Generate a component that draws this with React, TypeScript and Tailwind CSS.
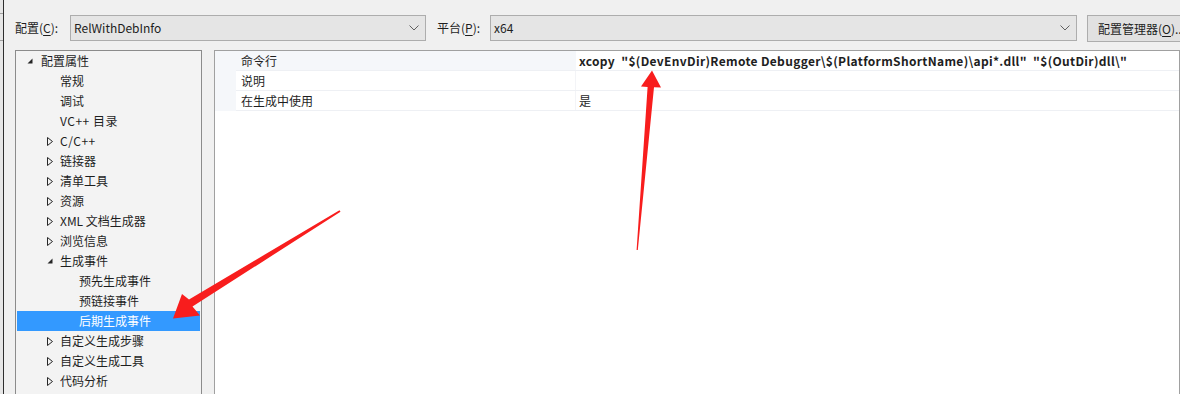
import React from "react";

const FONT = { fontFamily: '"Noto Sans CJK SC", "Noto Sans", sans-serif' };

function Chevron() {
  return (
    <svg width="10" height="6" viewBox="0 0 10 6" className="block">
      <path d="M0.5 0.5 L5 5 L9.5 0.5" fill="none" stroke="#606060" strokeWidth="1" />
    </svg>
  );
}

function Expanded() {
  return (
    <svg width="6" height="6" viewBox="0 0 6 6" className="block">
      <polygon points="5.5,0.5 5.5,5.5 0.5,5.5" fill="#262626" />
    </svg>
  );
}

function Collapsed() {
  return (
    <svg width="6" height="9" viewBox="0 0 6 9" className="block">
      <polygon points="0.5,0.5 5.5,4.5 0.5,8.5" fill="none" stroke="#262626" strokeWidth="1" />
    </svg>
  );
}

type Item = { label: string; level: number; state?: "open" | "closed"; selected?: boolean };

const items: Item[] = [
  { label: "配置属性", level: 0, state: "open" },
  { label: "常规", level: 1 },
  { label: "调试", level: 1 },
  { label: "VC++ 目录", level: 1 },
  { label: "C/C++", level: 1, state: "closed" },
  { label: "链接器", level: 1, state: "closed" },
  { label: "清单工具", level: 1, state: "closed" },
  { label: "资源", level: 1, state: "closed" },
  { label: "XML 文档生成器", level: 1, state: "closed" },
  { label: "浏览信息", level: 1, state: "closed" },
  { label: "生成事件", level: 1, state: "open" },
  { label: "预先生成事件", level: 2 },
  { label: "预链接事件", level: 2 },
  { label: "后期生成事件", level: 2, selected: true },
  { label: "自定义生成步骤", level: 1, state: "closed" },
  { label: "自定义生成工具", level: 1, state: "closed" },
  { label: "代码分析", level: 1, state: "closed" },
];

function TreeRow({ it }: { it: Item }) {
  const textPad = it.level === 0 ? "pl-[24px]" : it.level === 1 ? "pl-[43px]" : "pl-[62px]";
  const triPad = it.level === 0 ? "left-[10px]" : "left-[30px]";
  return (
    <div
      className={
        "relative h-[20px] flex items-center text-[12px] leading-none " +
        textPad +
        (it.selected ? " bg-[#3399ff] text-white" : " text-[#1e1e1e]")
      }
    >
      {it.state && (
        <span className={"absolute top-0 bottom-0 flex items-center " + triPad}>
          {it.state === "open" ? <Expanded /> : <Collapsed />}
        </span>
      )}
      <span className={it.label.startsWith("VC") || it.label.startsWith("C/") ? "tracking-[0.5px]" : ""}>{it.label}</span>
    </div>
  );
}

function Arrows() {
  return (
    <svg className="absolute left-0 top-0 pointer-events-none" width="1180" height="394" viewBox="0 0 1180 394">
      <polygon
        points="340.5,211.8 339.5,210.2 189,299.5 182,294 173,318.5 200,315.5 192.5,306.5"
        fill="#f81d1d"
      />
      <polygon
        points="637.8,250 636.6,250 647.6,87 641,86.5 652,70.5 661,87.5 654,87.3"
        fill="#f81d1d"
      />
    </svg>
  );
}

export default function App() {
  return (
    <div className="relative w-[1180px] h-[394px] overflow-hidden bg-[#f0f0f0] flex" style={FONT}>
      <div className="w-[3px] shrink-0 bg-[#e6e6e6] flex flex-col">
        <div className="h-[13px]" />
        <div className="h-[1px] bg-[#a0a0a0]" />
        <div className="h-[26px]" />
        <div className="h-[1px] bg-[#a0a0a0]" />
      </div>
      <div className="w-[1px] shrink-0 bg-[#2e2e2e]" />
      <div className="flex-1 flex flex-col pl-[11px] min-w-0">
        {/* top bar */}
        <div className="h-[50px] shrink-0 flex items-start pt-[15px] text-[12px] text-[#1e1e1e] whitespace-nowrap">
          <div className="w-[55px] shrink-0 h-[26px] flex items-center">
            配置(<span className="underline underline-offset-2">C</span>):
          </div>
          <div className="w-[356px] shrink-0 h-[26px] bg-[#e5e5e5] border border-[#adadad] flex items-center pl-[3px] pr-[6px]">
            <span className="flex-1">RelWithDebInfo</span>
            <Chevron />
          </div>
          <div className="w-[64px] shrink-0 h-[26px] flex items-center pl-[11px]">
            平台(<span className="underline underline-offset-2">P</span>):
          </div>
          <div className="w-[587px] shrink-0 h-[26px] bg-[#e5e5e5] border border-[#adadad] flex items-center pl-[3px] pr-[6px]">
            <span className="flex-1">x64</span>
            <Chevron />
          </div>
          <div className="ml-[10px] shrink-0 w-[110px] h-[27px] bg-[#e1e1e1] border border-[#adadad] flex items-center pl-[10px]">
            配置管理器(<span className="underline underline-offset-2">O</span>)...
          </div>
        </div>
        {/* panels */}
        <div className="flex-1 flex items-start gap-[12px] min-h-0">
          <div className="w-[187px] h-[400px] shrink-0 border border-[#8b8b8b] bg-[#f3f3f3] pt-[0px] px-[1px]">
            {items.map((it) => (
              <TreeRow key={it.label} it={it} />
            ))}
          </div>
          <div className="flex-1 h-[400px] border border-[#a0a0a0] bg-white flex text-[12px] text-[#1e1e1e] leading-none">
            <div className="w-[21px] shrink-0 bg-[#f5f7fa] h-[60px]" />
            <div className="flex-1 flex flex-col">
              <div className="h-[20px] flex border-b border-[#eef0f4]">
                <div className="w-[340px] shrink-0 bg-[#f5f7fa] flex items-center pl-[5px]">命令行</div>
                <div className="flex-1 flex items-center pl-[3px] font-bold whitespace-pre tracking-[0.33px]">
                  {'xcopy  "$(DevEnvDir)Remote Debugger\\$(PlatformShortName)\\api*.dll"  "$(OutDir)dll\\"'}
                </div>
              </div>
              <div className="h-[20px] flex border-b border-[#eef0f4]">
                <div className="w-[340px] shrink-0 flex items-center pl-[5px] border-r border-[#f3f4f7]">说明</div>
                <div className="flex-1" />
              </div>
              <div className="h-[20px] flex border-b border-[#eef0f4]">
                <div className="w-[340px] shrink-0 flex items-center pl-[5px] border-r border-[#f3f4f7]">在生成中使用</div>
                <div className="flex-1 flex items-center pl-[3px]">是</div>
              </div>
            </div>
          </div>
        </div>
      </div>
      <Arrows />
    </div>
  );
}
